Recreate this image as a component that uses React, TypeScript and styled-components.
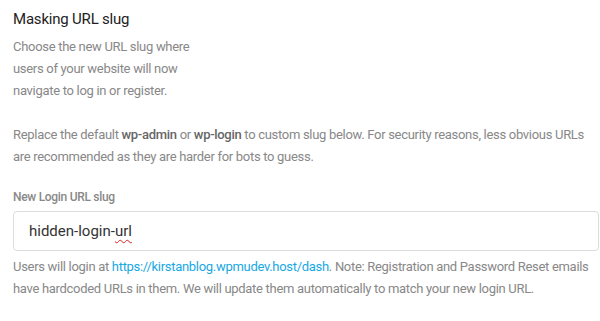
import React from "react";
import styled, { createGlobalStyle } from "styled-components";

const Global = createGlobalStyle`
  body {
    margin: 0;
    background: #fff;
    font-family: Roboto, "Liberation Sans", sans-serif;
    -webkit-font-smoothing: antialiased;
  }
`;

const Page = styled.div`
  padding: 8px 1px 0 13px;
  display: flex;
  flex-direction: column;
`;

const Title = styled.h3`
  margin: 0;
  font-size: 15px;
  line-height: 22px;
  font-weight: 400;
  letter-spacing: -0.2px;
  color: #222;
`;

const Intro = styled.p`
  margin: 6px 0 0;
  width: 190px;
  font-size: 13px;
  line-height: 22px;
  letter-spacing: -0.3px;
  color: #888;
`;

const Text = styled.p<{ $top: number }>`
  margin: ${props => `${props.$top}px`} 0 0;
  font-size: 13px;
  line-height: 22px;
  letter-spacing: -0.3px;
  color: #888;
`;

const Strong = styled.strong`
  font-weight: 500;
  color: #666;
`;

const Label = styled.label`
  margin-top: 21px;
  font-size: 12px;
  line-height: 16px;
  font-weight: 500;
  letter-spacing: -0.3px;
  color: #888;
`;

const Field = styled.div`
  margin-top: 6px;
  height: 40px;
  box-sizing: border-box;
  border: 1px solid #ddd;
  border-radius: 4px;
  padding: 0 15px;
  display: flex;
  align-items: center;
  font-size: 15px;
  color: #333;
`;

const Misspelt = styled.span`
  text-decoration: underline wavy #e02020;
  text-decoration-thickness: 1px;
  text-underline-offset: 3px;
`;

const Link = styled.a`
  color: #17a8e3;
  text-decoration: none;
`;

export default function App() {
  return (
    <>
      <Global />
      <Page>
        <Title>Masking URL slug</Title>
        <Intro>
          Choose the new URL slug where users of your website will now navigate to log in or register.
        </Intro>
        <Text $top={22}>
          Replace the default <Strong>wp-admin</Strong> or <Strong>wp-login</Strong> to custom slug below. For
          security reasons, less obvious URLs are recommended as they are harder for bots to guess.
        </Text>
        <Label>New Login URL slug</Label>
        <Field>
          hidden-login-<Misspelt>url</Misspelt>
        </Field>
        <Text $top={5}>
          Users will login at <Link href="#">https://kirstanblog.wpmudev.host/dash</Link>. Note: Registration
          and Password Reset emails have hardcoded URLs in them. We will update them automatically to match
          your new login URL.
        </Text>
      </Page>
    </>
  );
}
